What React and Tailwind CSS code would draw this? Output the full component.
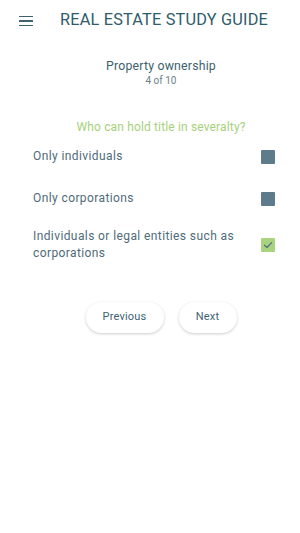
import React from "react";

function Box({ checked }) {
  if (checked) {
    return (
      <div className="w-[14px] h-[14px] shrink-0 rounded-[1px] bg-[#a9d47f] flex items-center justify-center">
        <svg width="10" height="10" viewBox="0 0 10 10" fill="none">
          <path d="M1.5 5.2 L4 7.5 L8.6 2.6" stroke="#5b6f8a" strokeWidth="1.3" strokeLinecap="round" strokeLinejoin="round" />
        </svg>
      </div>
    );
  }
  return <div className="w-[14px] h-[14px] shrink-0 rounded-[1px] bg-[#5d7b8b]" />;
}

function Option({ text, checked, className }) {
  return (
    <div className={"flex items-center justify-between " + (className || "")}>
      <div className="text-[12px] leading-[17px] tracking-[0.4px] text-[#4f6b79] w-[212px]">{text}</div>
      <Box checked={checked} />
    </div>
  );
}

export default function App() {
  return (
    <div className="w-[300px] h-[533px] bg-white" style={{ fontFamily: "Roboto, 'Liberation Sans', sans-serif" }}>
      <div className="flex items-center h-[41px] pl-[19px]">
        <div className="flex flex-col gap-[3px] w-[14px] mt-[1px]">
          <div className="h-[1.5px] bg-[#3d6373]" />
          <div className="h-[1.5px] bg-[#3d6373]" />
          <div className="h-[1.5px] bg-[#3d6373]" />
        </div>
        <div className="ml-[27px] text-[16.3px] tracking-[0.2px] text-[#2f5b6b] leading-none">REAL ESTATE STUDY GUIDE</div>
      </div>
      <div className="pl-[22px] flex flex-col items-center mt-[17px]">
        <div className="text-[12.3px] leading-[16px] text-[#3d5f6e] tracking-[0.2px]">Property ownership</div>
        <div className="text-[10px] leading-[12px] text-[#6b7f89] mt-[1px]">4 of 10</div>
        <div className="text-[12px] leading-[16px] text-[#a6d17c] tracking-[0.15px] mt-[32px]">Who can hold title in severalty?</div>
      </div>
      <div className="pl-[33px] pr-[25px] mt-[13px]">
        <Option text="Only individuals" />
        <Option text="Only corporations" className="mt-[25px]" />
        <Option text="Individuals or legal entities such as corporations" checked className="mt-[21px]" />
      </div>
      <div className="flex justify-center gap-[15px] mt-[40px] pl-[22px]">
        <button className="w-[78px] h-[31px] rounded-full bg-white text-[11px] text-[#3d6373] tracking-[0.2px] shadow-[0_1px_3px_rgba(0,0,0,0.2)]">Previous</button>
        <button className="w-[58px] h-[31px] rounded-full bg-white text-[11px] text-[#3d6373] tracking-[0.2px] shadow-[0_1px_3px_rgba(0,0,0,0.2)]">Next</button>
      </div>
    </div>
  );
}
